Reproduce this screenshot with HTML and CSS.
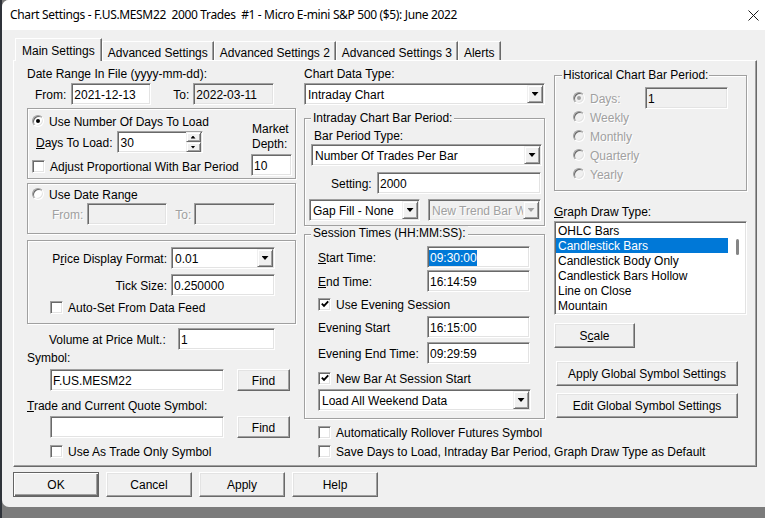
FILE: index.html
```html
<!DOCTYPE html>
<html>
<head>
<meta charset="utf-8">
<link rel="stylesheet" href="styles.css">
</head>
<body>
<div class="win">
  <div class="titlebar">
    <span class="title">Chart Settings - F.US.MESM22  2000 Trades  #1 - Micro E-mini S&amp;P 500 ($5): June 2022</span>
    <svg class="close" width="11" height="11" viewBox="0 0 11 11"><path d="M0.5 0.5L10.5 10.5M10.5 0.5L0.5 10.5" stroke="#1a1a1a" stroke-width="1"/></svg>
  </div>
  <div class="client">
    <div class="tabs">
      <div class="tab sel">Main Settings</div>
      <div class="tab">Advanced Settings</div>
      <div class="tab">Advanced Settings 2</div>
      <div class="tab">Advanced Settings 3</div>
      <div class="tab">Alerts</div>
    </div>
    <div class="panel">
      <!-- LEFT COLUMN -->
      <div class="col left">
        <div class="lbl mt5">Date Range In File (yyyy-mm-dd):</div>
        <div class="row mt3">
          <span class="ml8">From:</span>
          <div class="edit w80 ml5">2021-12-13</div>
          <span class="ml22">To:</span>
          <div class="edit dis w81 ml4">2022-03-11</div>
        </div>

        <div class="grp g1 mt3">
          <div class="g1-left">
            <div class="opt mt5"><span class="rad on"></span><span>Use Number Of Days To Load</span></div>
            <div class="row mt3">
              <span class="ml4"><u>D</u>ays To Load:</span>
              <div class="edit spin ml4">
                <span class="sp-txt">30</span>
                <span class="sp-btns"><span class="sbtn up"></span><span class="sbtn down"></span></span>
              </div>
            </div>
            <div class="opt mt6"><span class="chk"></span><span>Adjust Proportional With Bar Period</span></div>
          </div>
          <div class="g1-right">
            <div class="md">Market<br>Depth:</div>
            <div class="edit w41 mt3">10</div>
          </div>
        </div>

        <div class="grp g2 mt4">
          <div class="opt mt3 pl4"><span class="rad"></span><span>Use Date Range</span></div>
          <div class="row mt2">
            <span class="gray ml24">From:</span>
            <div class="edit dis w80 ml4"></div>
            <span class="gray ml8">To:</span>
            <div class="edit dis w81 ml3"></div>
          </div>
        </div>

        <div class="grp g3 mt6">
          <div class="row mt6">
            <span class="rlbl">P<u>r</u>ice Display Format:</span>
            <div class="edit combo w104"><span class="txt">0.01</span><span class="dd"></span></div>
          </div>
          <div class="row mt5">
            <span class="rlbl">Tick Size:</span>
            <div class="edit w104">0.250000</div>
          </div>
          <div class="opt mt4 ml22"><span class="chk"></span><span>Auto-Set From Data Feed</span></div>
        </div>

        <div class="row mt4">
          <span class="vol-lbl">Volume at Price Mult.:</span>
          <div class="edit w97">1</div>
        </div>
        <div class="lbl">Symbol:</div>
        <div class="row mt5">
          <div class="edit w174 ml23">F.US.MESM22</div>
          <div class="btn find">Find</div>
        </div>
        <div class="lbl mt7"><u>T</u>rade and Current Quote Symbol:</div>
        <div class="row mt4">
          <div class="edit w174 ml23"></div>
          <div class="btn find">Find</div>
        </div>
        <div class="opt mt6 ml23"><span class="chk"></span><span>Use As Trade Only Symbol</span></div>
      </div>

      <!-- MIDDLE COLUMN -->
      <div class="col mid">
        <div class="lbl mt5">Chart Data Type:</div>
        <div class="edit combo mt3"><span class="txt">Intraday Chart</span><span class="dd"></span></div>

        <div class="grp intraday">
          <div class="legend lg-mid">Intraday Chart Bar Period:</div>
          <div class="lbl mt3 ml9">Bar Period Type:</div>
          <div class="edit combo mt2 ml6 w231"><span class="txt">Number Of Trades Per Bar</span><span class="dd"></span></div>
          <div class="row mt6">
            <span class="ml26 set-lbl">Setting:</span>
            <div class="edit w164">2000</div>
          </div>
          <div class="row mt5">
            <div class="edit combo w111 ml4"><span class="txt">Gap Fill - None</span><span class="dd"></span></div>
            <div class="edit combo dis w113 ml8"><span class="txt gray">New Trend Bar When</span><span class="dd"></span></div>
          </div>
        </div>

        <div class="grp session">
          <div class="legend lg-mid lg-sess">Session Times (HH:MM:SS):</div>
          <div class="row mt6 pl13">
            <span class="tlbl"><u>S</u>tart Time:</span>
            <div class="edit w103"><span class="seltxt">09:30:00</span></div>
          </div>
          <div class="row mt2 pl13">
            <span class="tlbl"><u>E</u>nd Time:</span>
            <div class="edit w103">16:14:59</div>
          </div>
          <div class="opt mt5 pl13"><span class="chk"><svg width="8" height="8" viewBox="0 0 8 8"><path d="M0.8 3.6L3 5.8L7.2 1.4" fill="none" stroke="#000" stroke-width="1.9"/></svg></span><span>Use Evening Session</span></div>
          <div class="row mt5 pl13">
            <span class="tlbl">Evening Start</span>
            <div class="edit w103">16:15:00</div>
          </div>
          <div class="row mt4 pl13">
            <span class="tlbl">Evening End Time:</span>
            <div class="edit w103">09:29:59</div>
          </div>
          <div class="opt mt7 pl13"><span class="chk"><svg width="8" height="8" viewBox="0 0 8 8"><path d="M0.8 3.6L3 5.8L7.2 1.4" fill="none" stroke="#000" stroke-width="1.9"/></svg></span><span>New Bar At Session Start</span></div>
          <div class="edit combo mt4 ml13 w213"><span class="txt">Load All Weekend Data</span><span class="dd"></span></div>
        </div>

        <div class="opt mt6 ml14"><span class="chk"></span><span>Automatically Rollover Futures Symbol</span></div>
        <div class="opt mt5 ml14"><span class="chk"></span><span>Save Days to Load, Intraday Bar Period, Graph Draw Type as Default</span></div>
      </div>

      <!-- RIGHT COLUMN -->
      <div class="col right">
        <div class="grp hist">
          <div class="legend lg-right">Historical Chart Bar Period:</div>
          <div class="row mt5 pl18">
            <span class="rad dis on"></span>
            <span class="gray days-lbl">Days:</span>
            <div class="edit dis w83">1</div>
          </div>
          <div class="opt mt1 pl18"><span class="rad dis"></span><span class="gray">Weekly</span></div>
          <div class="opt mt5 pl18"><span class="rad dis"></span><span class="gray">Monthly</span></div>
          <div class="opt mt5 pl18"><span class="rad dis"></span><span class="gray">Quarterly</span></div>
          <div class="opt mt5 pl18"><span class="rad dis"></span><span class="gray">Yearly</span></div>
        </div>
        <div class="lbl mt13"><u>G</u>raph Draw Type:</div>
        <div class="list mt3">
          <div class="items">
            <div class="item">OHLC Bars</div>
            <div class="item sel">Candlestick Bars</div>
            <div class="item">Candlestick Body Only</div>
            <div class="item">Candlestick Bars Hollow</div>
            <div class="item">Line on Close</div>
            <div class="item">Mountain</div>
          </div>
          <div class="sbar"><div class="thumb"></div></div>
        </div>
        <div class="btn scale mt8">S<u>c</u>ale</div>
        <div class="btn glob mt13">Apply Global Symbol Settings</div>
        <div class="btn glob mt7">Edit Global Symbol Settings</div>
      </div>
    </div>
    <div class="actions">
      <div class="btn def">OK</div>
      <div class="btn">Cancel</div>
      <div class="btn">Apply</div>
      <div class="btn">Help</div>
    </div>
  </div>
</div>
</body>
</html>
```

FILE: styles.css
```css
* { box-sizing: border-box; }
html, body { margin: 0; padding: 0; }
body {
  width: 765px;
  height: 518px;
  overflow: hidden;
  background: linear-gradient(to right, #2f333a 0, #2f333a 2px, #7b7b7b 2px);
  font-family: "Liberation Sans", Arial, sans-serif;
  font-size: 12px;
  line-height: 14px;
  color: #000;
}
u { text-decoration: underline; text-underline-offset: 1px; }

.win {
  margin-left: 2px;
  width: 763px;
  height: 507px;
  background: #f0f0f0;
  border-radius: 7px 0 0 7px;
  display: flex;
  flex-direction: column;
  overflow: hidden;
}
.titlebar {
  height: 30px;
  flex: none;
  background: #fff;
  display: flex;
  align-items: center;
  padding-left: 8px;
}
.title {
  flex: 1;
  white-space: pre;
  font-family: "Noto Sans", "Open Sans", sans-serif;
  font-size: 12px;
  letter-spacing: -0.35px;
}
.close { margin-right: 6px; flex: none; }

.client { padding: 8px 0 0 11px; }
.tabs {
  display: flex;
  align-items: flex-end;
  height: 22px;
  margin-left: 2px;
  position: relative;
  z-index: 1;
}
.tab {
  height: 19px;
  padding: 3px 5px 0;
  border-left: 1px solid #fff;
  border-top: 1px solid #fff;
  border-right: 1px solid #696969;
  box-shadow: inset -1px 0 #a0a0a0;
  display: flex;
  align-items: center;
  white-space: nowrap;
}
.tab.sel {
  height: 23px;
  margin-bottom: -1px;
  padding: 1px 6px 0;
  background: #f0f0f0;
}

.panel {
  width: 744px;
  height: 407px;
  border: 1px solid;
  border-color: #fff #696969 #696969 #fff;
  box-shadow: inset -1px -1px #a0a0a0;
  display: flex;
  padding-left: 13px;
}
.col { display: flex; flex-direction: column; flex: none; }
.left { width: 269px; }
.mid { width: 241px; margin-left: 8px; }
.right { width: 193px; margin-left: 9px; }

.lbl { height: 14px; padding-top: 1px; white-space: nowrap; flex: none; }
.row { display: flex; align-items: center; height: 22px; flex: none; white-space: nowrap; }
.row > span:not(.rad) { padding-top: 2px; }
.opt { display: flex; align-items: center; height: 14px; white-space: nowrap; flex: none; }
.opt .rad + span, .opt .chk + span { margin-left: 5px; padding-top: 1px; }

.grp {
  border: 1px solid #a0a0a0;
  box-shadow: inset 1px 1px #fff, 1px 1px #fff;
  display: flex;
  flex-direction: column;
  flex: none;
}
.legend {
  align-self: flex-start;
  height: 14px;
  background: #f0f0f0;
  white-space: nowrap;
}

.edit {
  height: 22px;
  background: #fff;
  border: 1px solid;
  border-color: #a0a0a0 #fff #fff #a0a0a0;
  box-shadow: inset 1px 1px #696969, inset -1px -1px #e3e3e3;
  padding: 2px 2px 0;
  display: flex;
  align-items: center;
  white-space: nowrap;
  overflow: hidden;
  flex: none;
}
.edit.dis { background: #f0f0f0; }
.gray { color: #a0a0a0; text-shadow: 1px 1px #fff; }

.combo { padding: 0 1px 0 0; }
.combo .txt { flex: 1; padding: 2px 0 0 3px; overflow: hidden; white-space: nowrap; }
.dd {
  width: 16px;
  height: 18px;
  flex: none;
  background: #f0f0f0;
  border: 1px solid;
  border-color: #f0f0f0 #696969 #696969 #f0f0f0;
  box-shadow: inset 1px 1px #fff, inset -1px -1px #a0a0a0;
  display: flex;
  align-items: center;
  justify-content: center;
}
.dd::after {
  content: "";
  width: 7px;
  height: 4px;
  background: #000;
  clip-path: polygon(0 0, 100% 0, 50% 100%);
}
.combo.dis .dd::after { background: #a0a0a0; }

.spin { width: 86px; padding: 0 1px 0 2px; }
.sp-txt { flex: 1; padding: 2px 0 0 1px; }
.sp-btns { display: flex; flex-direction: column; width: 15px; flex: none; }
.sbtn {
  height: 10px;
  background: #f0f0f0;
  border: 1px solid;
  border-color: #f0f0f0 #696969 #696969 #f0f0f0;
  box-shadow: inset 1px 1px #fff, inset -1px -1px #a0a0a0;
  display: flex;
  align-items: center;
  justify-content: center;
}
.sbtn::after {
  content: "";
  width: 5px;
  height: 3px;
  background: #000;
}
.sbtn.up::after { clip-path: polygon(50% 0, 100% 100%, 0 100%); }
.sbtn.down::after { clip-path: polygon(0 0, 100% 0, 50% 100%); }

.rad {
  width: 12px;
  height: 12px;
  border-radius: 50%;
  flex: none;
  background: #fff;
  border: 1px solid;
  border-color: #a0a0a0 #fff #fff #a0a0a0;
  box-shadow: inset 1px 1px #696969, inset -1px -1px #e3e3e3;
  position: relative;
}
.rad.on::after {
  content: "";
  position: absolute;
  left: 3px;
  top: 3px;
  width: 4px;
  height: 4px;
  border-radius: 50%;
  background: #000;
}
.rad.dis { background: #f0f0f0; }
.rad.dis.on::after { background: #a0a0a0; }

.chk {
  width: 13px;
  height: 13px;
  flex: none;
  background: #fff;
  border: 1px solid;
  border-color: #a0a0a0 #fff #fff #a0a0a0;
  box-shadow: inset 1px 1px #696969, inset -1px -1px #e3e3e3;
  display: flex;
  align-items: center;
  justify-content: center;
}

.btn {
  height: 25px;
  flex: none;
  display: flex;
  align-items: center;
  justify-content: center;
  padding-top: 1px;
  background: #f0f0f0;
  border: 1px solid;
  border-color: #fff #696969 #696969 #fff;
  box-shadow: inset -1px -1px #a0a0a0, inset 1px 1px #e3e3e3;
  white-space: nowrap;
}
.btn.def {
  border-color: #646464;
  box-shadow: inset 1px 1px #fff, inset -1px -1px #696969, inset -2px -2px #a0a0a0;
}

/* spacing helpers */
.mt1 { margin-top: 1px; }
.mt2 { margin-top: 2px; }
.mt3 { margin-top: 3px; }
.mt4 { margin-top: 4px; }
.mt5 { margin-top: 5px; }
.mt6 { margin-top: 6px; }
.mt7 { margin-top: 7px; }
.mt8 { margin-top: 8px; }
.mt13 { margin-top: 13px; }
.ml3 { margin-left: 3px; }
.ml4 { margin-left: 4px; }
.ml5 { margin-left: 5px; }
.ml6 { margin-left: 6px; }
.ml8 { margin-left: 8px; }
.ml9 { margin-left: 9px; }
.ml13 { margin-left: 13px; }
.ml14 { margin-left: 14px; }
.ml22 { margin-left: 22px; }
.ml23 { margin-left: 23px; }
.ml24 { margin-left: 24px; }
.ml26 { margin-left: 26px; }
.pl4 { padding-left: 4px; }
.pl13 { padding-left: 13px; }
.pl18 { padding-left: 18px; }

.w41 { width: 41px; }
.w80 { width: 80px; }
.w81 { width: 81px; }
.w83 { width: 83px; }
.w97 { width: 97px; }
.w103 { width: 103px; }
.w104 { width: 104px; }
.w111 { width: 111px; }
.w113 { width: 113px; }
.w164 { width: 164px; }
.w174 { width: 174px; }
.w213 { width: 213px; }
.w231 { width: 231px; }

/* left column groups */
.g1 { height: 71px; flex-direction: row; }
.g1-left { display: flex; flex-direction: column; padding-left: 4px; }
.g1-right { margin-left: auto; margin-right: 3px; margin-top: 12px; width: 41px; display: flex; flex-direction: column; }
.md { line-height: 15px; height: 30px; padding-left: 1px; padding-top: 1px; white-space: nowrap; }
.g2 { height: 51px; }
.g3 { height: 84px; }
.rlbl { width: 143px; text-align: right; padding-right: 4px; }
.vol-lbl { margin-left: 22px; width: 129px; }
.find { width: 53px; height: 22px; margin-left: 13px; }

/* middle column */
.intraday { height: 108px; margin-top: 13px; }
.session { height: 185px; margin-top: 8px; }
.lg-mid { margin-top: -8px; margin-left: 6px; padding: 0 2px; }
.lg-sess { margin-top: -9px; }
.set-lbl { width: 46px; }
.tlbl { width: 109px; }
.seltxt { background: #0078d7; color: #fff; line-height: 16px; margin-left: -1px; padding-left: 1px; }

/* right column */
.hist { height: 116px; margin-top: 14px; }
.lg-right { margin-top: -8px; margin-left: 7px; padding: 0 1px; }
.days-lbl { margin-left: 5px; width: 55px; }
.list {
  height: 94px;
  background: #fff;
  border: 1px solid;
  border-color: #a0a0a0 #fff #fff #a0a0a0;
  box-shadow: inset 1px 1px #696969, inset -1px -1px #e3e3e3;
  padding: 1px;
  display: flex;
  flex: none;
}
.items { width: 172px; display: flex; flex-direction: column; flex: none; }
.item { height: 15px; line-height: 15px; padding: 1px 0 0 2px; white-space: nowrap; overflow: visible; }
.item.sel { background: #0078d7; color: #fff; }
.sbar { flex: 1; }
.thumb { margin: 16px 0 0 8px; width: 3px; height: 16px; background: #858585; border-radius: 2px; }
.scale { width: 81px; }
.glob { width: 182px; margin-left: 2px; }

.actions { display: flex; gap: 7px; margin-top: 5px; }
.actions .btn { width: 86px; }
```
